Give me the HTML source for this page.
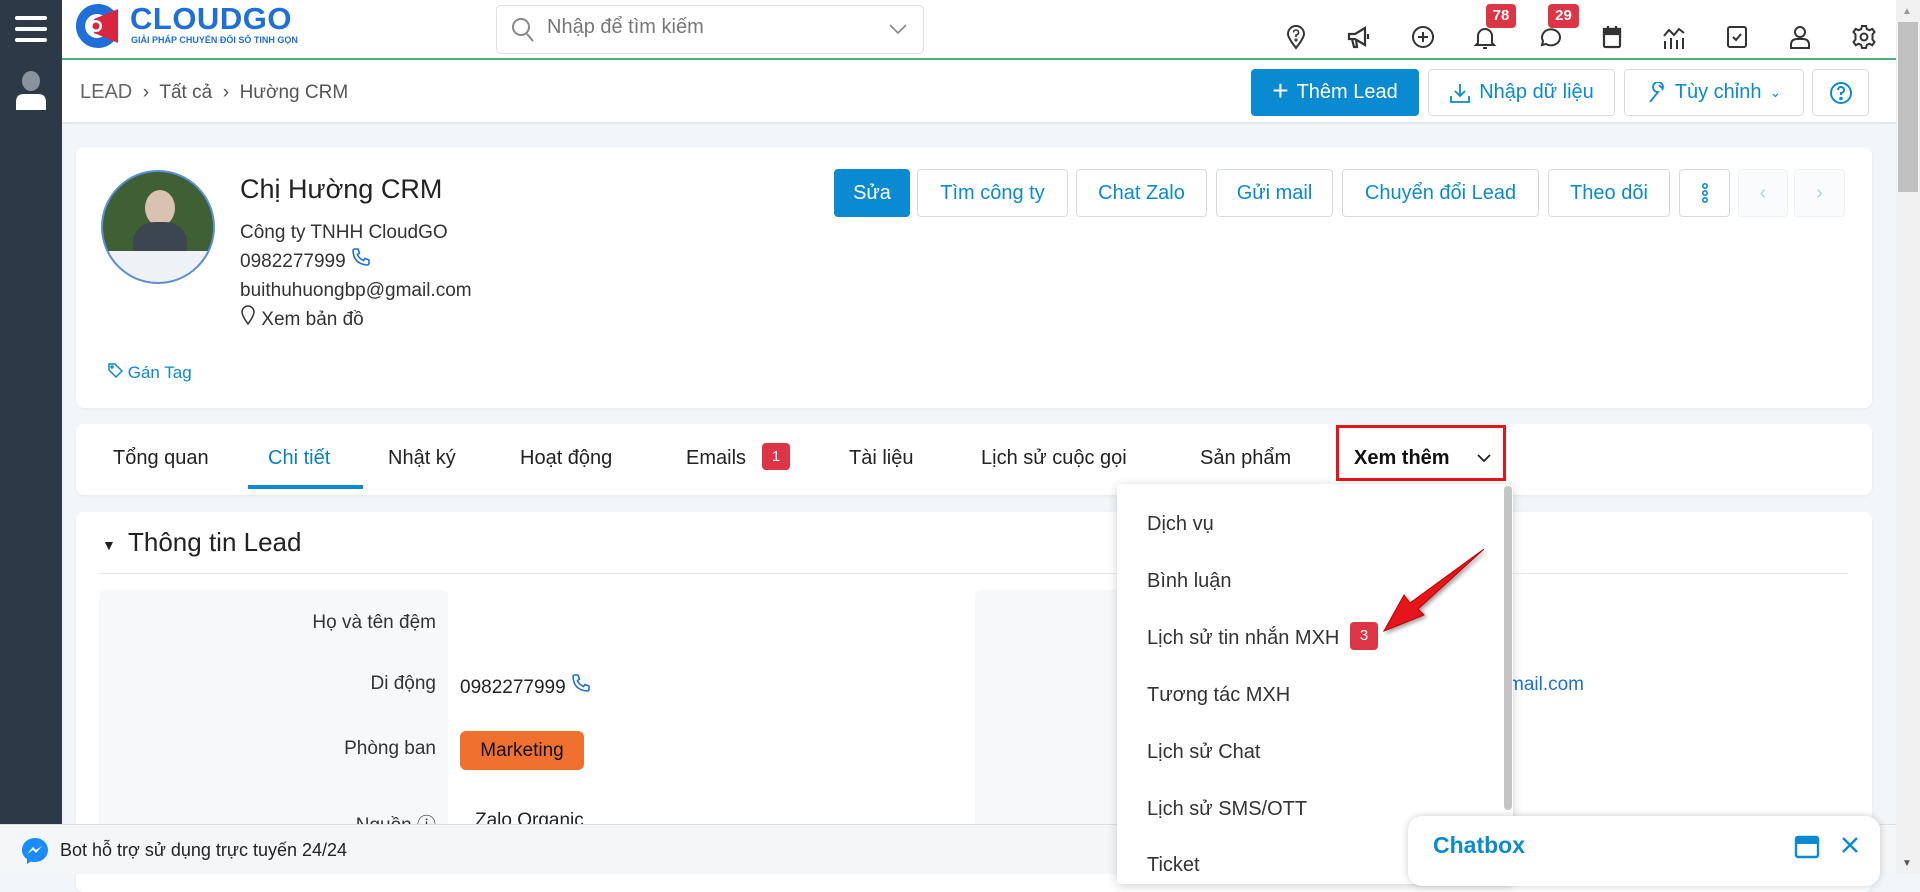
<!DOCTYPE html>
<html><head><meta charset="utf-8"><style>
*{box-sizing:border-box;margin:0;padding:0}
body{width:1920px;height:874px;overflow:hidden;background:#f3f6f9;font-family:"Liberation Sans","Noto Sans CJK SC",sans-serif;color:#222;position:relative}
.a{position:absolute}
.side{left:0;top:0;width:62px;height:824px;background:#2c3a47}
.hdr{left:62px;top:0;width:1834px;height:60px;background:#fff;border-bottom:2px solid #4caf7d}
.bc{left:62px;top:60px;width:1834px;height:64px;background:#fff;border-bottom:2px solid #e3e6ea}
.btn{position:absolute;border:1px solid #d6dbe0;border-radius:4px;background:#fff;color:#0a8ad0;font-size:20px;display:flex;align-items:center;justify-content:center;gap:8px}
.card{position:absolute;background:#fff;border-radius:8px;box-shadow:0 1px 3px rgba(0,0,0,.06)}
.tab{position:absolute;top:447px;font-size:20px;color:#222}
.icon{position:absolute;top:24px;width:26px;height:26px}
.badge{position:absolute;background:#dc3545;color:#fff;font-size:14px;font-weight:bold;border-radius:4px;text-align:center;line-height:22px}
.dd{position:absolute;left:1147px;font-size:20px;color:#333}
.lbl{position:absolute;font-size:19px;color:#333;text-align:right;width:340px;left:96px}
</style></head><body>
<div class="a side"></div>
<div class="a" style="left:15px;top:16px;width:32px;height:4px;background:#fff;border-radius:2px;box-shadow:0 11px 0 #fff,0 22px 0 #fff"></div>
<svg class="a" style="left:15px;top:70px" width="32" height="40" viewBox="0 0 32 40"><ellipse cx="16" cy="11" rx="9" ry="10" fill="#8a939c"/><path d="M1 40 V32 Q1 24 9 24 H23 Q31 24 31 32 V40Z" fill="#fff"/></svg>
<div class="a hdr"></div>
<svg class="a" style="left:70px;top:1px" width="52" height="50" viewBox="0 0 52 50"><path d="M44 10 A22 22 0 1 0 44 40 L36 33 A12 12 0 1 1 36 17Z" fill="#1e6fd9"/><path d="M24 18 L48 8 L48 42 L24 32Z" fill="#d7263d"/><circle cx="26" cy="25" r="6" fill="#fff"/><circle cx="26" cy="25" r="3.5" fill="#d7263d"/></svg>
<div class="a" style="left:130px;top:1px;font-size:31px;font-weight:bold;color:#1e6fd9;letter-spacing:0.5px">CLOUDGO</div>
<div class="a" style="left:131px;top:35px;font-size:9px;font-weight:bold;color:#1e6fd9">GIẢI PHÁP CHUYỂN ĐỔI SỐ TINH GỌN</div>
<div class="a" style="left:496px;top:5px;width:428px;height:49px;border:1px solid #dde1e5;border-radius:5px;background:#fff"></div>
<svg class="a" style="left:510px;top:16px" width="26" height="28" viewBox="0 0 26 28"><circle cx="11" cy="11" r="8" fill="none" stroke="#888" stroke-width="2"/><path d="M17 18 L23 25" stroke="#888" stroke-width="2"/></svg>
<div class="a" style="left:547px;top:16px;font-size:20px;color:#777">Nhập để tìm kiếm</div>
<svg class="a" style="left:888px;top:22px" width="20" height="14"><path d="M2 3 L10 11 L18 3" fill="none" stroke="#888" stroke-width="1.6"/></svg>
<svg class="icon" style="left:1283px" viewBox="0 0 26 26" fill="none" stroke="#333" stroke-width="2"><path d="M13 24 C6 15 5 12 5 10 A8 8 0 0 1 21 10 C21 12 20 15 13 24Z"/><path d="M10.5 8.5 A2.5 2.5 0 1 1 13 11 V13" stroke-width="1.6"/><circle cx="13" cy="16" r="0.6"/></svg>
<svg class="icon" style="left:1346px" viewBox="0 0 26 26" fill="none" stroke="#333" stroke-width="2.2"><path d="M3 10 H9 L19 4 V21 L9 15 H3Z"/><path d="M6 15 L8 23 H11 L10 15"/><path d="M22 10 V15"/></svg>
<svg class="icon" style="left:1410px" viewBox="0 0 26 26" fill="none" stroke="#333" stroke-width="2"><circle cx="13" cy="13" r="10"/><path d="M13 8 V18 M8 13 H18"/></svg>
<svg class="icon" style="left:1472px" viewBox="0 0 26 26" fill="none" stroke="#333" stroke-width="2"><path d="M6 19 V12 A7 7 0 0 1 20 12 V19 L22 21 H4Z"/><path d="M11 24 H15"/></svg>
<svg class="icon" style="left:1536px" viewBox="0 0 26 26" fill="none" stroke="#333" stroke-width="2"><path d="M6 21 L7 17 A9 8 0 1 1 10 20Z"/></svg>
<svg class="icon" style="left:1599px" viewBox="0 0 26 26" fill="none" stroke="#333" stroke-width="2.2"><rect x="5" y="5" width="16" height="18" rx="1.5"/><rect x="5" y="5" width="16" height="5" fill="#333"/><path d="M9 2 V6 M17 2 V6"/></svg>
<svg class="icon" style="left:1661px" viewBox="0 0 26 26" fill="none" stroke="#333" stroke-width="2"><path d="M3 12 L8 6 L13 11 L18 5 L23 9"/><path d="M4 17 V25 M10 14 V25 M16 16 V25 M22 14 V25"/></svg>
<svg class="icon" style="left:1724px" viewBox="0 0 26 26" fill="none" stroke="#333" stroke-width="2"><rect x="4" y="3" width="18" height="20" rx="2"/><path d="M9 13 L12 16 L17 10"/></svg>
<svg class="icon" style="left:1787px" viewBox="0 0 26 26" fill="none" stroke="#333" stroke-width="2"><circle cx="13" cy="8" r="5"/><path d="M4 24 V21 Q4 15 10 15 H16 Q22 15 22 21 V24Z"/></svg>
<svg class="icon" style="left:1851px" viewBox="0 0 26 26" fill="none" stroke="#333" stroke-width="2"><circle cx="13" cy="13" r="3.5"/><path d="M11 2 H15 L15.8 5 L18.5 6.3 L21.3 4.8 L23.5 8 L21.5 10.5 V15.5 L23.5 18 L21.3 21.2 L18.5 19.7 L15.8 21 L15 24 H11 L10.2 21 L7.5 19.7 L4.7 21.2 L2.5 18 L4.5 15.5 V10.5 L2.5 8 L4.7 4.8 L7.5 6.3 L10.2 5Z"/></svg>
<div class="badge" style="left:1486px;top:4px;width:30px;height:24px;line-height:24px;font-size:15px">78</div>
<div class="badge" style="left:1548px;top:4px;width:31px;height:24px;line-height:24px;font-size:15px">29</div>
<div class="a" style="left:1896px;top:0;width:24px;height:874px;background:#f1f1f1"></div>
<div class="a" style="left:1898px;top:22px;width:20px;height:170px;background:#c1c1c1"></div>
<div class="a" style="left:1902px;top:6px;font-size:10px;color:#999">▲</div>
<div class="a" style="left:1902px;top:858px;font-size:10px;color:#555">▼</div>
<div class="a bc"></div>
<div class="a" style="left:80px;top:81px;font-size:19px;color:#555"><span style="font-size:20px;color:#666">LEAD</span> &nbsp;›&nbsp; Tất cả &nbsp;›&nbsp; Hường CRM</div>
<div class="btn" style="left:1251px;top:69px;width:168px;height:47px;background:#0a8ad0;color:#fff;border-color:#0a8ad0"><span style="font-size:28px;font-weight:300;margin-top:-3px">+</span>Thêm Lead</div>
<div class="btn" style="left:1428px;top:69px;width:187px;height:47px"><svg width="22" height="22" viewBox="0 0 22 22" fill="none" stroke="#0a8ad0" stroke-width="1.8"><path d="M11 2 V14 M6 9 L11 14 L16 9 M2 14 V20 H20 V14"/></svg>Nhập dữ liệu</div>
<div class="btn" style="left:1624px;top:69px;width:180px;height:47px"><svg width="20" height="22" viewBox="0 0 20 22" fill="none" stroke="#0a8ad0" stroke-width="1.8"><path d="M3 20 L11 10 A5 5 0 1 1 15 8 M12 3 L15 6"/></svg>Tùy chỉnh <span style="font-size:14px">&#8964;</span></div>
<div class="btn" style="left:1812px;top:69px;width:57px;height:47px"><svg width="26" height="26" viewBox="0 0 26 26" fill="none" stroke="#0a8ad0" stroke-width="2"><circle cx="13" cy="13" r="10"/><path d="M10 10 A3 3 0 1 1 13 13 V15"/><circle cx="13" cy="18.5" r="0.8"/></svg></div>
<div class="card" style="left:76px;top:147px;width:1796px;height:261px"></div>
<div class="a" style="left:101px;top:170px;width:114px;height:114px;border-radius:50%;border:2px solid #5b8fd6;background:#3f5f34;overflow:hidden"><div style="position:absolute;left:42px;top:18px;width:30px;height:36px;border-radius:50%;background:#d9c2b2"></div><div style="position:absolute;left:30px;top:50px;width:54px;height:50px;border-radius:40% 40% 0 0;background:#3c4650"></div><div style="position:absolute;left:0;bottom:0;width:100%;height:28%;background:#eef2f7"></div></div>
<div class="a" style="left:240px;top:174px;font-size:27px;color:#222">Chị Hường CRM</div>
<div class="a" style="left:240px;top:218px;font-size:19px;line-height:29px;color:#333">Công ty TNHH CloudGO<br>0982277999 <svg width="20" height="20" viewBox="0 0 20 20" fill="none" stroke="#1e6fd9" stroke-width="1.6"><path d="M4 2 L7 2 L8.5 6 L6.5 7.5 Q8 11.5 12.5 13.5 L14 11.5 L18 13 V16 Q18 18 16 18 Q3 17 2 4 Q2 2 4 2Z"/></svg><br>buithuhuongbp@gmail.com<br><svg width="16" height="20" viewBox="0 0 16 20" fill="none" stroke="#333" stroke-width="1.5"><path d="M8 19 C3 12 2 9 2 7 A6 6 0 0 1 14 7 C14 9 13 12 8 19Z"/></svg> Xem bản đồ</div>
<div class="a" style="left:107px;top:362px;font-size:17px;color:#0a8ad0"><svg width="16" height="16" viewBox="0 0 16 16" fill="none" stroke="#0a8ad0" stroke-width="1.5"><path d="M2 2 H8 L15 9 L9 15 L2 8Z"/><circle cx="5" cy="5" r="1"/></svg> Gán Tag</div>
<div class="btn" style="left:834px;top:169px;width:76px;height:48px;background:#0a8ad0;color:#fff;border-color:#0a8ad0">Sửa</div>
<div class="btn" style="left:917px;top:169px;width:151px;height:48px">Tìm công ty</div>
<div class="btn" style="left:1076px;top:169px;width:131px;height:48px">Chat Zalo</div>
<div class="btn" style="left:1216px;top:169px;width:117px;height:48px">Gửi mail</div>
<div class="btn" style="left:1342px;top:169px;width:197px;height:48px">Chuyển đổi Lead</div>
<div class="btn" style="left:1548px;top:169px;width:122px;height:48px">Theo dõi</div>
<div class="btn" style="left:1679px;top:169px;width:51px;height:48px"><svg width="8" height="22" viewBox="0 0 8 22" fill="none" stroke="#0a8ad0" stroke-width="1.6"><circle cx="4" cy="4" r="2.2"/><circle cx="4" cy="11" r="2.2"/><circle cx="4" cy="18" r="2.2"/></svg></div>
<div class="btn" style="left:1738px;top:169px;width:50px;height:48px;border-color:#eef0f2;background:#fafbfc;color:#a9d3ee">‹</div>
<div class="btn" style="left:1794px;top:169px;width:51px;height:48px;border-color:#eef0f2;background:#fafbfc;color:#a9d3ee">›</div>
<div class="card" style="left:76px;top:424px;width:1796px;height:71px"></div>
<div class="tab" style="left:113px">Tổng quan</div>
<div class="tab" style="left:268px;color:#0a7fc0">Chi tiết</div>
<div class="a" style="left:248px;top:485px;width:115px;height:4px;background:#0a8ad0"></div>
<div class="tab" style="left:388px">Nhật ký</div>
<div class="tab" style="left:520px">Hoạt động</div>
<div class="tab" style="left:686px">Emails</div>
<div class="badge" style="left:762px;top:443px;width:28px;height:27px;line-height:27px;font-weight:normal;font-size:15px">1</div>
<div class="tab" style="left:849px">Tài liệu</div>
<div class="tab" style="left:981px">Lịch sử cuộc gọi</div>
<div class="tab" style="left:1200px">Sản phẩm</div>
<div class="tab" style="left:1354px;font-weight:bold;color:#111">Xem thêm</div>
<svg class="a" style="left:1476px;top:452px" width="16" height="12"><path d="M2 3 L8 9 L14 3" fill="none" stroke="#222" stroke-width="1.8"/></svg>
<div class="a" style="left:1336px;top:425px;width:170px;height:56px;border:3px solid #e8141b"></div>
<div class="card" style="left:76px;top:512px;width:1796px;height:380px"></div>
<div class="a" style="left:102px;top:537px;font-size:14px">▼</div>
<div class="a" style="left:128px;top:527px;font-size:26px;color:#222">Thông tin Lead</div>
<div class="a" style="left:99px;top:573px;width:1749px;height:1px;background:#e6e8eb"></div>
<div class="a" style="left:99px;top:590px;width:349px;height:240px;background:#f7f8fa;border-radius:6px"></div>
<div class="a" style="left:975px;top:590px;width:500px;height:240px;background:#f7f8fa;border-radius:6px"></div>
<div class="lbl" style="top:612px">Họ và tên đệm</div>
<div class="lbl" style="top:673px">Di động</div>
<div class="lbl" style="top:738px">Phòng ban</div>
<div class="lbl" style="top:810px">Nguồn ⓘ</div>
<div class="a" style="left:460px;top:673px;font-size:19px;color:#222">0982277999 <svg width="20" height="20" viewBox="0 0 20 20" fill="none" stroke="#1e6fd9" stroke-width="1.6"><path d="M4 2 L7 2 L8.5 6 L6.5 7.5 Q8 11.5 12.5 13.5 L14 11.5 L18 13 V16 Q18 18 16 18 Q3 17 2 4 Q2 2 4 2Z"/></svg></div>
<div class="a" style="left:460px;top:731px;width:124px;height:39px;background:#f07030;border-radius:6px;font-size:19px;color:#111;line-height:39px;text-align:center">Marketing</div>
<div class="a" style="left:475px;top:810px;font-size:19px;color:#222">Zalo Organic</div>
<div class="a" style="left:1508px;top:674px;font-size:19px;color:#1e6fd9">mail.com</div>
<div class="a" style="left:0;top:824px;width:1896px;height:50px;background:#f5f6f7;border-top:1px solid #dcdfe2"></div>
<svg class="a" style="left:20px;top:836px" width="30" height="30" viewBox="0 0 30 30"><path d="M15 2 C7 2 2 8 2 14 C2 18 4 21 7 23 V28 L11 25.5 C12 26 13.5 26 15 26 C23 26 28 20 28 14 C28 8 23 2 15 2Z" fill="#1a8cff"/><path d="M7 18 L13 11 L16 14 L22 10 L16 17 L13 14Z" fill="#fff"/></svg>
<div class="a" style="left:60px;top:840px;font-size:18px;color:#222">Bot hỗ trợ sử dụng trực tuyến 24/24</div>
<div class="a" style="left:1117px;top:484px;width:396px;height:400px;background:#fff;border-radius:4px;box-shadow:0 2px 10px rgba(0,0,0,.18)"></div>
<div class="a" style="left:1504px;top:486px;width:8px;height:324px;background:#c4c4c4;border-radius:4px"></div>
<div class="dd" style="top:513px">Dịch vụ</div>
<div class="dd" style="top:570px">Bình luận</div>
<div class="dd" style="top:627px">Lịch sử tin nhắn MXH</div>
<div class="badge" style="left:1350px;top:622px;width:28px;height:28px;line-height:28px;font-weight:normal;font-size:15px">3</div>
<div class="dd" style="top:684px">Tương tác MXH</div>
<div class="dd" style="top:741px">Lịch sử Chat</div>
<div class="dd" style="top:798px">Lịch sử SMS/OTT</div>
<div class="dd" style="top:854px">Ticket</div>
<svg class="a" style="left:1380px;top:545px" width="110" height="92" viewBox="0 0 110 92"><path d="M104 4 L38 64 L44 70 L4 86 L24 50 L30 58 Z" fill="#e8141b" stroke="#b00" stroke-width="1" style="filter:drop-shadow(2px 2px 2px rgba(0,0,0,.4))"/></svg>
<div class="a" style="left:1408px;top:816px;width:472px;height:70px;background:#fff;border-radius:14px;box-shadow:0 0 8px rgba(0,0,0,.2)"></div>
<div class="a" style="left:1433px;top:832px;font-size:23px;font-weight:bold;color:#0a8ad0">Chatbox</div>
<svg class="a" style="left:1794px;top:835px" width="26" height="24" viewBox="0 0 26 24"><rect x="2" y="2" width="22" height="20" rx="2" fill="none" stroke="#0a8ad0" stroke-width="2.4"/><rect x="2" y="2" width="22" height="7" fill="#0a8ad0"/></svg>
<svg class="a" style="left:1841px;top:836px" width="18" height="18"><path d="M2 2 L16 16 M16 2 L2 16" stroke="#0a8ad0" stroke-width="2.4"/></svg>
</body></html>
